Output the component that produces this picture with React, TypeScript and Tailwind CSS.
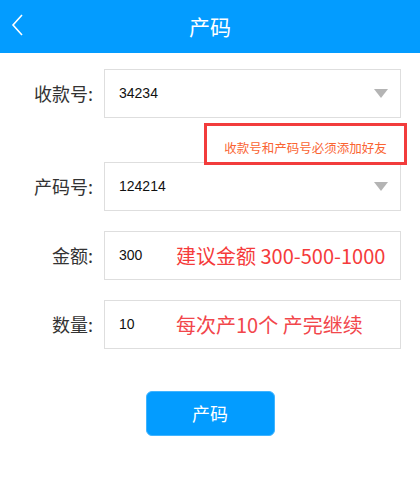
import { ReactNode } from 'react';

const font = { fontFamily: '"Noto Sans CJK SC", "Noto Sans", sans-serif' };
const valueFont = { fontFamily: '"Liberation Sans", "Noto Sans CJK SC", sans-serif' };

function Caret() {
  return (
    <svg width="14" height="9" viewBox="0 0 14 9" className="ml-auto mr-[12px]">
      <path d="M0 0 H14 L7 9 Z" fill="#b4b4b4" />
    </svg>
  );
}

interface RowProps {
  label: string;
  value: string;
  select?: boolean;
  hint?: string;
  hintColor?: string;
  className?: string;
  children?: ReactNode;
}

function Row({ label, value, select, hint, hintColor, className = '', children }: RowProps) {
  return (
    <div className={`relative flex items-center ${className}`}>
      <div className="w-[104px] pr-[11px] text-right text-[18px] text-[#333]">{label}</div>
      <div className="flex h-[49px] w-[297px] items-center border border-[#dedede] bg-white pl-[14px]">
        <span className="w-[57px] text-[14px] text-[#111]" style={valueFont}>
          {value}
        </span>
        {hint && (
          <span className="whitespace-nowrap text-[20px] leading-none" style={{ color: hintColor }}>
            {hint}
          </span>
        )}
        {select && <Caret />}
      </div>
      {children}
    </div>
  );
}

export default function App() {
  return (
    <div className="min-h-[483px] w-[420px] bg-white" style={font}>
      <div className="relative flex h-[53px] items-center justify-center bg-[#039cff]">
        <svg width="14" height="24" viewBox="0 0 14 24" className="absolute left-[11px] top-[13px]">
          <path d="M11 2 L2 12 L11 22" fill="none" stroke="#fff" strokeWidth="1.6" />
        </svg>
        <span className="text-[21px] text-white">产码</span>
      </div>

      <div className="flex flex-col pt-[16px]">
        <Row label="收款号:" value="34234" select className="z-10 mb-[44px]">
          <div className="absolute left-[204px] top-[54px] flex h-[42px] w-[203px] items-end justify-center border-[3px] border-[#f23c3c] pb-[8px]">
            <span className="text-[12.5px] leading-none text-[#fa6432]">收款号和产码号必须添加好友</span>
          </div>
        </Row>
        <Row label="产码号:" value="124214" select className="mb-[20px]" />
        <Row label="金额:" value="300" hint="建议金额 300-500-1000" hintColor="#f53b3b" className="mb-[20px]" />
        <Row label="数量:" value="10" hint="每次产10个 产完继续" hintColor="#f2464b" />
      </div>

      <div className="flex justify-center pt-[42px]">
        <button className="h-[45px] w-[129px] rounded-[6px] border border-[#40b4ff] bg-[#039cff] text-[18px] text-white">
          产码
        </button>
      </div>
    </div>
  );
}
